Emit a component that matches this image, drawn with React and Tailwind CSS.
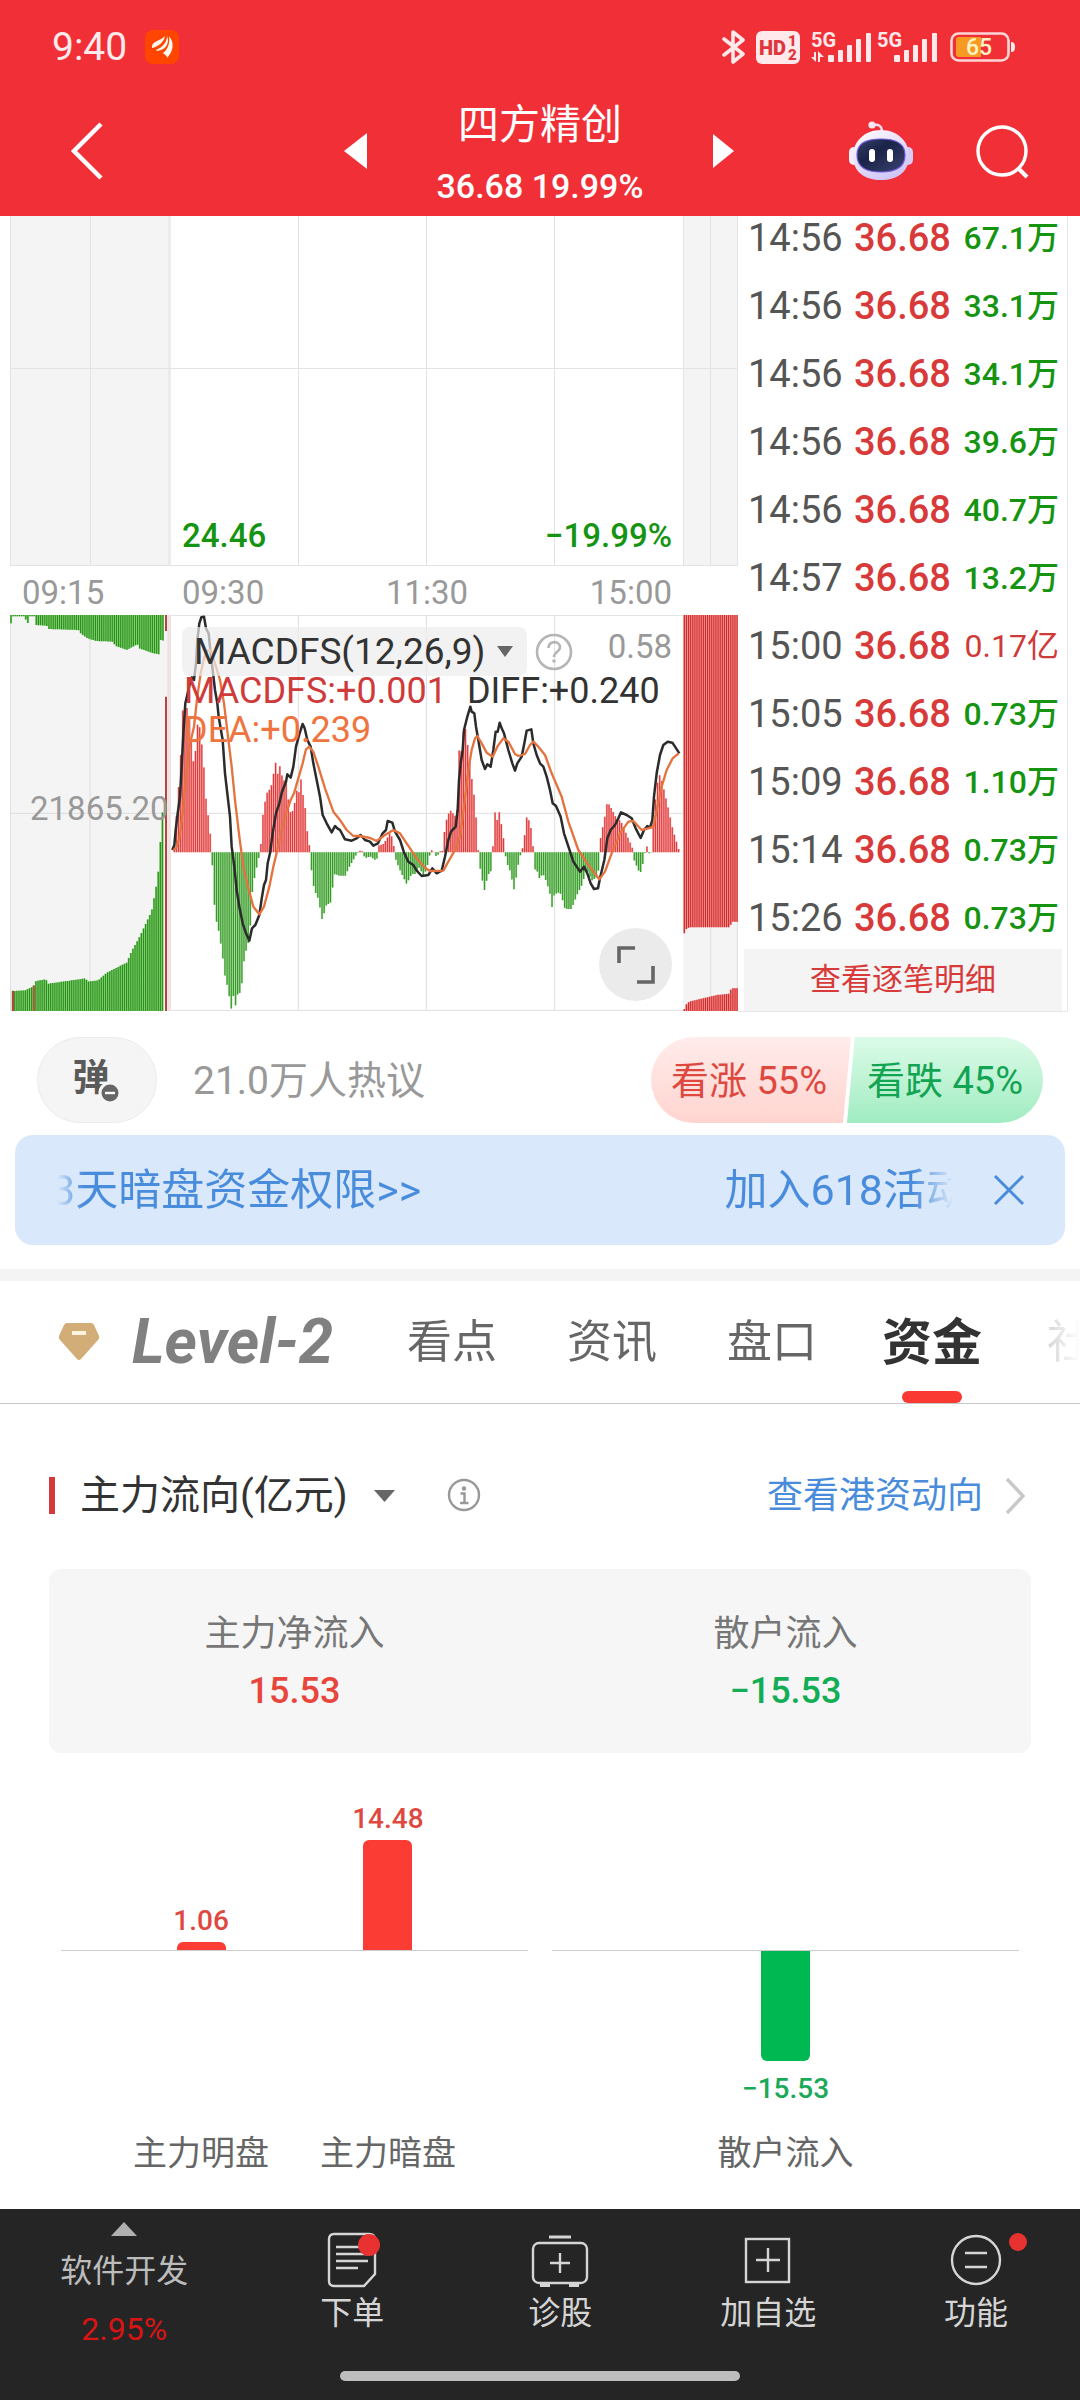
const TICKS = [
  { time: '14:56', price: '36.68', volume: '67.1万' },
  { time: '14:56', price: '36.68', volume: '33.1万' },
  { time: '14:56', price: '36.68', volume: '34.1万' },
  { time: '14:56', price: '36.68', volume: '39.6万' },
  { time: '14:56', price: '36.68', volume: '40.7万' },
  { time: '14:57', price: '36.68', volume: '13.2万' },
  { time: '15:00', price: '36.68', volume: '0.17亿', up: true },
  { time: '15:05', price: '36.68', volume: '0.73万' },
  { time: '15:09', price: '36.68', volume: '1.10万' },
  { time: '15:14', price: '36.68', volume: '0.73万' },
  { time: '15:26', price: '36.68', volume: '0.73万' },
];

// MACD lines and histogram, in chart units (x 30-2214, y 45-1233)
const DIFF_LINE =
  '517,750 523,735 527,690 533,640 540,590 545,500 550,400 556,310 570,250 576,232 582,240 588,190 592,120 598,70 604,52 612,50 618,85 626,100 632,160 638,210 645,270 652,310 656,350 668,420 675,520 690,650 695,740 703,800 710,870 718,920 728,970 738,1000 748,1022 756,985 766,975 778,945 786,890 792,855 798,840 803,790 810,760 818,700 828,640 838,610 846,575 858,545 862,523 872,533 880,500 888,440 896,410 902,390 908,372 914,385 922,420 932,440 940,490 950,540 960,590 968,645 980,670 995,697 1005,678 1012,685 1020,690 1035,718 1055,722 1070,715 1082,705 1095,720 1110,725 1120,737 1134,730 1148,700 1158,690 1163,663 1177,668 1185,695 1200,720 1213,760 1225,785 1240,795 1250,812 1265,828 1285,825 1297,805 1310,820 1325,812 1335,770 1345,720 1353,695 1367,680 1373,630 1377,540 1382,490 1388,450 1392,390 1402,350 1411,320 1415,335 1423,340 1428,380 1435,420 1445,480 1455,507 1462,493 1472,500 1480,450 1487,395 1493,395 1499,368 1505,385 1512,400 1525,450 1537,490 1545,512 1552,490 1565,470 1573,430 1580,392 1594,388 1600,430 1610,465 1620,490 1630,500 1640,530 1650,570 1658,610 1668,618 1682,650 1692,700 1707,745 1720,785 1740,815 1752,800 1762,820 1772,850 1782,867 1794,865 1800,835 1813,780 1822,715 1832,690 1845,675 1855,655 1863,637 1880,645 1895,655 1907,685 1922,714 1932,690 1942,678 1950,683 1957,660 1962,590 1970,520 1980,465 1990,435 2003,425 2017,428 2025,440 2038,460';

const DEA_LINE =
  '520,750 528,745 538,715 548,640 558,530 568,440 582,380 592,290 602,220 612,175 622,152 632,150 645,190 660,240 672,310 684,410 695,500 705,600 718,710 730,800 745,865 760,920 778,943 792,920 808,860 820,800 832,750 845,690 858,640 872,600 882,580 895,535 908,490 918,448 928,440 940,455 955,500 975,565 1000,635 1020,660 1040,690 1060,708 1080,708 1110,714 1130,723 1155,705 1180,690 1200,700 1220,730 1250,775 1275,803 1290,813 1330,812 1345,785 1365,750 1380,710 1392,620 1405,510 1415,450 1425,415 1432,408 1445,430 1460,458 1478,470 1492,440 1510,415 1525,425 1545,462 1555,468 1575,462 1590,435 1600,425 1615,440 1635,465 1655,520 1685,590 1705,665 1735,750 1765,795 1798,838 1815,815 1835,760 1860,700 1885,665 1900,663 1925,690 1945,685 1960,680 1972,620 1985,560 2000,510 2018,475 2036,460';

const HISTOGRAM = [
  [523, 10], [532, 150], [540, 250], [549, 440], [560, 440], [568, 385], [575, 330], [582, 250], [594, 400], [602, 360],
  [612, 250], [620, 130], [628, 95], [634, 5], [637, -40], [645, -190], [655, -230], [665, -290], [675, -370], [683, -405],
  [695, -475], [700, -430], [708, -465], [715, -410], [722, -430], [733, -315], [745, -270], [752, -210], [758, -105],
  [770, -45], [780, 0], [784, 40], [790, 130], [803, 185], [812, 190], [827, 270], [833, 235], [840, 260], [848, 220],
  [858, 210], [870, 120], [880, 125], [890, 185], [897, 180], [903, 220], [912, 150], [918, 120], [924, 30], [931, 15],
  [934, -50], [942, -110], [955, -140], [967, -205], [978, -160], [992, -150], [1003, -65], [1018, -70], [1036, -70],
  [1050, -40], [1070, -5], [1080, 5], [1090, 2], [1094, -18], [1110, -12], [1128, -25], [1134, -10], [1136, 20], [1150, 25],
  [1160, 40], [1170, 60], [1178, 40], [1184, 2], [1188, -25], [1205, -65], [1220, -95], [1235, -65], [1245, -65],
  [1258, -45], [1270, -70], [1280, -50], [1290, -5], [1297, 10], [1310, -15], [1320, 3], [1331, 5], [1334, 80],
  [1345, 115], [1352, 125], [1365, 110], [1372, 130], [1378, 320], [1385, 300], [1393, 395], [1400, 345], [1408, 280],
  [1418, 200], [1425, 150], [1432, 50], [1436, -20], [1445, -75], [1455, -120], [1462, -70], [1474, -55], [1478, 5],
  [1485, 120], [1492, 95], [1499, 125], [1506, 70], [1514, 20], [1518, -25], [1530, -55], [1543, -115], [1552, -50],
  [1562, -5], [1570, 20], [1581, 112], [1592, 80], [1600, 10], [1604, -50], [1614, -60], [1620, -85], [1627, -60],
  [1640, -90], [1650, -125], [1657, -170], [1663, -125], [1680, -120], [1688, -145], [1695, -170], [1715, -170],
  [1730, -130], [1745, -100], [1760, -50], [1775, -85], [1790, -75], [1799, -40], [1801, 40], [1815, 110], [1822, 152],
  [1835, 130], [1850, 100], [1862, 95], [1875, 65], [1890, 30], [1900, 5], [1903, -25], [1918, -60], [1924, -58],
  [1932, -15], [1938, 15], [1944, 20], [1946, -3], [1956, 0], [1960, 90], [1970, 200], [1980, 235], [1990, 195],
  [2003, 140], [2018, 70], [2030, 30], [2038, 3],
];

const PRE_TOP = [
  [33, 25], [39, 4], [75, 4], [82, 32], [88, 4], [104, 4], [108, 30], [140, 32], [145, 42], [235, 45], [242, 55],
  [262, 70], [290, 78], [340, 80], [345, 92], [380, 105], [412, 88], [418, 100], [460, 115], [478, 118], [484, 60], [492, 88],
];
const PRE_BOTTOM = [
  [38, 60], [75, 62], [100, 74], [108, 90], [138, 95], [145, 82], [258, 98], [262, 88], [295, 92], [320, 115],
  [380, 145], [395, 180], [420, 225], [455, 300], [468, 370], [478, 440], [484, 570], [492, 630],
];
const POST_TOP = [[2053, 955], [2059, 942], [2068, 937], [2190, 937], [2195, 920], [2212, 920]];
const POST_BOTTOM = [[2053, 6], [2059, 20], [2068, 28], [2110, 38], [2150, 48], [2187, 52], [2194, 68], [2212, 68]];

const STEP = 6.33;

const sample = (points) => {
  const bars = [];
  let i = 0;
  for (let x = points[0][0]; x <= points[points.length - 1][0]; x += STEP) {
    while (i < points.length - 2 && points[i + 1][0] < x) i += 1;
    const [x0, v0] = points[i];
    const [x1, v1] = points[i + 1];
    bars.push([x, v0 + ((v1 - v0) * (x - x0)) / (x1 - x0)]);
  }
  return bars;
};

const flip = (bars) => bars.map(([x, v]) => [x, -v]);

const barPath = (bars, base) => bars.map(([x, v]) => `M${x.toFixed(1)} ${base}V${(base - v).toFixed(1)}`).join('');

const Bars = ({ bars, base, color, light }) => (
  <>
    <path d={barPath(bars, base)} stroke={light} strokeWidth="6.4" />
    <path d={barPath(bars, base)} stroke={color} strokeWidth="3.6" />
  </>
);

const RED = '#d22a2a';
const RED_LIGHT = '#f59a9a';
const GREEN = '#279314';
const GREEN_LIGHT = '#8fd083';

const Signal = ({ arrows }) => (
  <svg width="60" height="34" viewBox="0 0 60 34" fill="#ffe9ea" aria-hidden="true">
    <text x="0" y="17" fontFamily="Roboto" fontSize="20" fontWeight="700">5G</text>
    {arrows && <path d="M3 22h2v10l-5-5h3zM9 32h-2V21l6 6h-4z" />}
    <rect x="17" y="25" width="6" height="7" rx="1" />
    <rect x="27" y="20" width="5" height="12" rx="1" />
    <rect x="36" y="15" width="5" height="17" rx="1" />
    <rect x="45" y="9" width="5" height="23" rx="1" />
    <rect x="55" y="3" width="5" height="29" rx="1" />
  </svg>
);

const StatusBar = () => (
  <div className="flex h-[94px] items-center pl-[52px] pr-16 text-[#ffe9ea]">
    <span className="text-[39px] leading-none">9:40</span>
    <svg className="ml-[18px]" width="34" height="34" viewBox="0 0 34 34" aria-hidden="true">
      <rect width="34" height="34" rx="8" fill="#ff4500" />
      <path
        d="M7 16C8 11 15 11 20 6C19 12 13 17 7 18zM11 20C18 17 22 12 22 6C25 13 21 20 12 21zM18 23C23 19 25 13 24 6C30 13 28 22 22 28C22 25 20 25 18 23z"
        fill="#fff8ee"
      />
    </svg>
    <div className="ml-auto flex items-center">
      <svg width="24" height="36" viewBox="0 0 24 36" fill="none" stroke="#ffe9ea" strokeWidth="3.6" strokeLinejoin="round" strokeLinecap="round" aria-hidden="true">
        <path d="M2 10L21 25L11 33V3L21 11L2 26" />
      </svg>
      <svg className="ml-[10px]" width="44" height="33" viewBox="0 0 44 33" aria-hidden="true">
        <rect width="44" height="33" rx="6" fill="#ffe9ea" />
        <g fill="#e0353c" fontFamily="Roboto" fontWeight="900">
          <text x="3" y="24" fontSize="20">HD</text>
          <text x="32" y="15" fontSize="15">1</text>
          <text x="32" y="29" fontSize="15">2</text>
        </g>
      </svg>
      <div className="ml-[11px] flex gap-[6px]">
        <Signal arrows />
        <Signal />
      </div>
      <svg className="ml-[13px]" width="66" height="30" viewBox="0 0 66 30" aria-hidden="true">
        <rect x="1.5" y="1.5" width="57" height="27" rx="7" fill="none" stroke="#ffd5d6" strokeWidth="2.6" />
        <path d="M9 5h22v20H9a3 3 0 0 1-3-3V8a3 3 0 0 1 3-3z" fill="#f79a22" />
        <path d="M61 10c3 0 4 2 4 5s-1 5-4 5z" fill="#ffe9ea" />
        <text x="29" y="23" textAnchor="middle" fill="#fff3c4" fontFamily="Roboto" fontSize="23" fontWeight="500">65</text>
      </svg>
    </div>
  </div>
);

const RobotIcon = () => (
  <svg width="64" height="60" viewBox="0 0 64 60" aria-hidden="true">
    <defs>
      <linearGradient id="helmet" x1="0" y1="0" x2="0.6" y2="1">
        <stop offset="0" stopColor="#ffffff" />
        <stop offset="0.6" stopColor="#e4dcfb" />
        <stop offset="1" stopColor="#cfc6f5" />
      </linearGradient>
      <linearGradient id="visor" x1="0" y1="0" x2="1" y2="1">
        <stop offset="0" stopColor="#35406b" />
        <stop offset="0.4" stopColor="#1a2448" />
        <stop offset="1" stopColor="#3a4370" />
      </linearGradient>
    </defs>
    <path d="M24 4C30 3 33 5 33 11" fill="none" stroke="#f3dff0" strokeWidth="2.4" />
    <circle cx="23" cy="4" r="3.6" fill="#f7e6f4" />
    <rect x="0" y="26" width="10" height="18" rx="5" fill="#f4effc" />
    <rect x="54" y="26" width="10" height="18" rx="5" fill="#d6ccf5" />
    <path d="M32 9C48 9 60 20 60 35C60 51 48 59 32 59S4 51 4 35C4 20 16 9 32 9z" fill="url(#helmet)" />
    <path d="M32 18C47 18 56 22 56 34S47 51 32 51S8 46 8 34S17 18 32 18z" fill="url(#visor)" stroke="#6f58d8" strokeWidth="1.2" />
    <rect x="20" y="28" width="6" height="13" rx="3" fill="#fff" />
    <rect x="38" y="28" width="6" height="13" rx="3" fill="#fff" />
  </svg>
);

const Header = () => (
  <header className="bg-[#f12f37] text-white">
    <StatusBar />
    <div className="grid grid-cols-[1fr_auto_1fr]">
      <div className="flex items-center justify-between pb-2 pl-[70px] pr-[70px]">
        <button type="button" aria-label="返回">
          <svg width="34" height="58" viewBox="0 0 34 58" fill="none" stroke="#fff" strokeWidth="4.5">
            <path d="M31 2L4 29L31 56" />
          </svg>
        </button>
        <button type="button" aria-label="上一只">
          <svg width="24" height="36" viewBox="0 0 24 36" fill="#fff">
            <path d="M24 0V36L1 18z" />
          </svg>
        </button>
      </div>
      <div className="text-center">
        <h1 className="text-[41px] leading-[62px]">四方精创</h1>
        <p className="text-[34px] font-medium leading-[60px]">36.68 19.99%</p>
      </div>
      <div className="flex items-center justify-between pb-2 pl-[70px] pr-[51px]">
        <button type="button" aria-label="下一只">
          <svg width="22" height="34" viewBox="0 0 22 34" fill="#fff">
            <path d="M0 0V34L21 17z" />
          </svg>
        </button>
        <div className="flex items-center gap-[62px]">
          <button type="button" aria-label="智能助手">
            <RobotIcon />
          </button>
          <button type="button" aria-label="搜索">
            <svg width="54" height="56" viewBox="0 0 54 56" fill="none" stroke="#fff" strokeWidth="3.4">
              <circle cx="27" cy="28" r="24" />
              <path d="M43 45L52 54" strokeWidth="4" />
            </svg>
          </button>
        </div>
      </div>
    </div>
  </header>
);

const PriceChart = () => (
  <div className="relative h-[350px]">
    <svg className="block h-full w-full" viewBox="0 0 728 350" preserveAspectRatio="none" aria-hidden="true">
      <rect width="160" height="350" fill="#f4f4f4" />
      <rect x="674" width="54" height="350" fill="#f4f4f4" />
      <g fill="#e3e3e3">
        <rect width="1" height="350" />
        <rect x="80" width="1" height="350" />
        <rect x="158" width="3" height="350" fill="#ebebeb" />
        <rect x="288" width="1" height="350" />
        <rect x="416" width="1" height="350" />
        <rect x="544" width="1" height="350" />
        <rect x="673" width="1" height="350" />
        <rect x="700" width="1" height="350" />
        <rect x="727" width="1" height="350" />
        <rect y="152" width="728" height="1" />
        <rect y="349" width="728" height="1" />
      </g>
    </svg>
    <div className="absolute bottom-2 left-[172px] right-[66px] flex justify-between text-[33px] font-medium leading-[44px] text-[#159412]">
      <span>24.46</span>
      <span>−19.99%</span>
    </div>
  </div>
);

const TimeAxis = () => (
  <div className="flex h-[49px] items-center pl-3 pr-[66px] pt-1 text-[33px] leading-none text-[#999]">
    <span className="w-40">09:15</span>
    <div className="flex flex-1 items-center justify-between">
      <span>09:30</span>
      <span>11:30</span>
      <span>15:00</span>
    </div>
  </div>
);

const MacdChart = () => {
  const histogram = sample(HISTOGRAM);

  return (
    <div className="relative h-[396px]">
      <svg className="block h-full w-full" viewBox="30 45 2184 1188" preserveAspectRatio="none" fill="none" aria-hidden="true">
        <rect x="30" y="45" width="480" height="1188" fill="#f4f4f4" />
        <rect x="2050" y="45" width="164" height="1188" fill="#f4f4f4" />
        <g stroke="#dedede" strokeWidth="3">
          <path d="M31 45V1233M270 45V1233M895 45V1233M1279 45V1233M1664 45V1233M2132 45V1233M2212 45V1233" />
          <path d="M30 46H2214M30 640H2050M510 1231H2214" />
        </g>
        <rect x="502" y="45" width="11" height="1188" fill="#f0e2e2" />

        <Bars bars={flip(sample(PRE_TOP))} base={45} color={GREEN} light={GREEN_LIGHT} />
        <Bars bars={sample(PRE_BOTTOM)} base={1233} color={GREEN} light={GREEN_LIGHT} />
        <path d="M498 45V93M498 290V1233M39 1172V1233" stroke="#b5453c" strokeWidth="6" />
        <path d="M102 1157V1233" stroke="#9a6a3a" strokeWidth="8" />
        <Bars bars={flip(sample(POST_TOP))} base={45} color={RED} light={RED_LIGHT} />
        <Bars bars={sample(POST_BOTTOM)} base={1233} color={RED} light={RED_LIGHT} />

        <Bars bars={histogram.filter(([, v]) => v >= 0)} base={757} color="#de3c3c" light="#f9b0b0" />
        <Bars bars={histogram.filter(([, v]) => v < 0)} base={757} color="#389a28" light="#aedda8" />
        <polyline points={DIFF_LINE} stroke="#2b2b2b" strokeWidth="7.5" strokeLinejoin="round" />
        <polyline points={DEA_LINE} stroke="#e5733f" strokeWidth="7" strokeLinejoin="round" />
      </svg>

      <div className="absolute left-[172px] right-[66px] top-3 flex items-center">
        <button type="button" className="flex h-[49px] items-center gap-3 rounded-lg bg-[#ececec]/70 pl-3 pr-[14px] text-[37px] leading-none text-[#333]">
          MACDFS(12,26,9)
          <svg width="16" height="11" viewBox="0 0 16 11" fill="#666" aria-hidden="true">
            <path d="M0 0H16L8 11z" />
          </svg>
        </button>
        <button type="button" aria-label="指标说明" className="ml-2">
          <svg width="38" height="38" viewBox="0 0 38 38" fill="none" stroke="#b5b5b5" strokeWidth="2.6">
            <circle cx="19" cy="19" r="17" />
            <path d="M13.5 15C13.5 7 25 7.5 25 14.5C25 19 19 18.5 19 24" />
            <circle cx="19" cy="28" r="1" fill="#b5b5b5" strokeWidth="1.5" />
          </svg>
        </button>
        <span className="ml-auto self-start text-[33px] leading-[40px] text-[#999]">0.58</span>
      </div>
      <p className="absolute left-[174px] right-[60px] top-[57px] text-[36px] leading-[39px] text-[#ef7440]">
        <span className="mr-5 text-[#cf3a3a]">MACDFS:+0.001</span>
        <span className="text-[#333]">DIFF:+0.240</span>
        <br />
        DEA:+0.239
      </p>
      <span className="absolute left-5 top-[174px] text-[33px] leading-[40px] text-[#999]">21865.20</span>

      <button type="button" aria-label="全屏" className="absolute bottom-[10px] right-[66px] rounded-full bg-[#ebebeb]">
        <svg width="73" height="73" viewBox="0 0 73 73" fill="none" stroke="#666" strokeWidth="3.6">
          <path d="M20 35V20H36M54 38V54H38" />
        </svg>
      </button>
    </div>
  );
};

const TickTable = () => (
  <aside className="flex h-[796px] w-[330px] flex-col border-b border-r border-[#e8e8e8]">
    <div className="min-h-0 flex-1 overflow-hidden">
      <table className="-mt-3 w-full table-fixed text-[38px] leading-none">
        <tbody>
          {TICKS.map((tick, index) => (
            <tr key={index} className="h-[68px]">
              <td className="w-[116px] pl-[10px] text-left text-[#555]">{tick.time}</td>
              <td className="w-[104px] text-left font-medium text-[#d83a3a]">{tick.price}</td>
              <td className={`pr-2 text-right text-[32px] ${tick.up ? 'text-[#cf3a3a]' : 'font-medium text-[#159412]'}`}>
                {tick.volume}
              </td>
            </tr>
          ))}
        </tbody>
      </table>
    </div>
    <button type="button" className="ml-[6px] mr-[5px] h-[62px] shrink-0 bg-[#f4f4f4] text-[31px] text-[#d83a3a]">
      查看逐笔明细
    </button>
  </aside>
);

const ChatRow = () => (
  <div className="flex items-center pb-3 pl-[37px] pr-[37px] pt-[25px]">
    <button
      type="button"
      aria-label="弹幕"
      className="flex h-[86px] w-[120px] items-center justify-center rounded-full border border-[#ececec] bg-[#f5f5f5] pb-1 pr-3"
    >
      <span className="relative text-[37px] font-bold leading-none text-[#5a5a5a]">
        弹
        <svg className="absolute -bottom-2 -right-3" width="24" height="24" viewBox="0 0 24 24" aria-hidden="true">
          <circle cx="12" cy="12" r="10" fill="#666" stroke="#f5f5f5" strokeWidth="3" />
          <path d="M7 12H17" stroke="#fff" strokeWidth="2.4" />
        </svg>
      </span>
    </button>
    <a href="#talk" className="ml-9 pt-0.5 text-[39px] text-[#999]">
      21.0万人热议
    </a>
    <div className="ml-auto flex h-[86px] overflow-hidden rounded-full text-[38px]">
      <button
        type="button"
        className="w-[200px] bg-linear-to-b from-[#ffeceb] to-[#ffd4cf] pr-1 pt-0.5 text-[#df483f] [clip-path:polygon(0_0,100%_0,96%_100%,0_100%)]"
      >
        看涨 55%
      </button>
      <button
        type="button"
        className="-ml-1 w-[196px] bg-linear-to-b from-[#dcfbe9] to-[#a0ecc1] pt-0.5 text-[#12a453] [clip-path:polygon(4%_0,100%_0,100%_100%,0_100%)]"
      >
        看跌 45%
      </button>
    </div>
  </div>
);

const Banner = () => (
  <div className="mx-[15px] mb-6 flex h-[110px] items-center rounded-[18px] bg-[#d9e8fb] pl-9 pr-10 text-[43px] text-[#4a8cdc]">
    <a
      href="#activity"
      className="flex min-w-0 flex-1 justify-between overflow-hidden whitespace-nowrap [mask-image:linear-gradient(to_right,transparent_6px,black_32px,black_calc(100%_-_40px),transparent)]"
    >
      <span>3天暗盘资金权限&gt;&gt;</span>
      <span className="-mr-4">加入618活动</span>
    </a>
    <button type="button" aria-label="关闭" className="ml-10">
      <svg width="32" height="32" viewBox="0 0 32 32" fill="none" stroke="#4a8cdc" strokeWidth="3">
        <path d="M2 2L30 30M30 2L2 30" />
      </svg>
    </button>
  </div>
);

const TABS = ['看点', '资讯', '盘口', '资金', '社区'];

const Tabs = () => (
  <div className="border-b border-[#c8c8c8]">
    <div className="flex h-[122px] overflow-hidden pl-[58px] [mask-image:linear-gradient(to_left,transparent,black_60px)]">
      <button type="button" className="flex w-[314px] shrink-0 items-center gap-8 text-[#808080]">
        <svg width="42" height="40" viewBox="0 0 42 40" aria-hidden="true">
          <path d="M9 1H33Q35 1 36 3L41 14Q42 16 40 18L23 37Q21 39 19 37L2 18Q0 16 1 14L6 3Q7 1 9 1z" fill="#d3ad78" />
          <path d="M14 11H28" stroke="#fff4e0" strokeWidth="4" />
        </svg>
        <span className="text-[62px] font-bold italic leading-none">Level-2</span>
      </button>
      {TABS.map((tab) => (
        <button
          key={tab}
          type="button"
          className={`relative w-40 shrink-0 pt-0.5 ${tab === '资金' ? 'text-[50px] font-bold text-[#333]' : 'text-[45px] text-[#666]'} ${tab === '社区' ? 'opacity-50' : ''}`}
        >
          {tab}
          {tab === '资金' && <span className="absolute bottom-0 left-1/2 h-3 w-[60px] -translate-x-1/2 rounded-full bg-[#fa3a32]" />}
        </button>
      ))}
    </div>
  </div>
);

const FlowBar = ({ value, height, label, negative }) => (
  <div className="flex w-2/5 flex-col items-center">
    <div className="flex h-[197px] w-full flex-col items-center justify-end">
      {!negative && (
        <>
          <span className="mb-[6px] text-[28px] font-medium leading-[30px] text-[#df483f]">{value}</span>
          <span className="w-[49px] rounded-t-md bg-[#fa3c34]" style={{ height }} />
        </>
      )}
    </div>
    <div className="flex h-[178px] flex-col items-center">
      {negative && (
        <>
          <span className="w-[49px] rounded-b-md bg-[#00b852]" style={{ height }} />
          <span className="mt-[13px] text-[28px] font-medium leading-[30px] text-[#1aa957]">{value}</span>
        </>
      )}
    </div>
    <span className="whitespace-nowrap text-[34px] leading-[50px] text-[#666]">{label}</span>
  </div>
);

const FlowGroup = ({ children }) => (
  <div className="relative flex flex-1 justify-center">
    <div className="absolute left-0 right-0 top-[197px] h-px bg-[#ccc]" />
    {children}
  </div>
);

const MoneyFlow = () => (
  <section className="pt-[61px]">
    <div className="flex h-[60px] items-center pl-[49px] pr-[54px]">
      <span className="h-[37px] w-[6px] bg-[#d33a3a]" />
      <button type="button" className="ml-[25px] flex items-center gap-[26px] pt-0.5 text-[40px] text-[#333]">
        主力流向(亿元)
        <svg width="21" height="12" viewBox="0 0 21 12" fill="#666" aria-hidden="true">
          <path d="M0 0H21L10.5 12z" />
        </svg>
      </button>
      <button type="button" aria-label="说明" className="ml-[52px]">
        <svg width="34" height="34" viewBox="0 0 34 34" fill="none" stroke="#999" strokeWidth="2.4">
          <circle cx="17" cy="17" r="15" />
          <circle cx="17" cy="10.5" r="1.5" fill="#999" strokeWidth="1.5" />
          <path d="M13.5 15.5H17.5V25M13 25H21.5" />
        </svg>
      </button>
      <a href="#hk" className="ml-auto flex items-center gap-[22px] pt-0.5 text-[36px] text-[#4a8cdc]">
        查看港资动向
        <svg width="21" height="38" viewBox="0 0 21 38" fill="none" stroke="#c8c8c8" strokeWidth="3.4" aria-hidden="true">
          <path d="M2 2L18 19L2 36" />
        </svg>
      </a>
    </div>

    <dl className="mx-[49px] mt-11 grid h-[184px] grid-cols-2 rounded-[12px] bg-[#f6f6f6] pt-[37px] text-center text-[36px]">
      <div>
        <dt className="leading-[56px] text-[#777]">主力净流入</dt>
        <dd className="font-medium leading-[58px] text-[#e8453c]">15.53</dd>
      </div>
      <div>
        <dt className="leading-[56px] text-[#777]">散户流入</dt>
        <dd className="font-medium leading-[58px] text-[#12ad55]">−15.53</dd>
      </div>
    </dl>

    <div className="flex gap-6 px-[61px]">
      <FlowGroup>
        <FlowBar value="1.06" height={8} label="主力明盘" />
        <FlowBar value="14.48" height={110} label="主力暗盘" />
      </FlowGroup>
      <FlowGroup>
        <FlowBar value="−15.53" height={111} label="散户流入" negative />
      </FlowGroup>
    </div>
  </section>
);

const NavItem = ({ label, children }) => (
  <button type="button" className="flex flex-1 flex-col items-center pt-[22px] text-[32px] leading-[44px] text-[#d5d5d5]">
    {children}
    <span>{label}</span>
  </button>
);

const BottomNav = () => (
  <footer className="mt-auto bg-[#252525]">
    <nav className="flex h-[162px]">
      <button type="button" className="flex w-[23%] flex-col items-center pt-[13px] text-[32px]">
        <svg width="26" height="14" viewBox="0 0 26 14" fill="#b0b0b0" aria-hidden="true">
          <path d="M13 0L26 14H0z" />
        </svg>
        <span className="mt-[6px] leading-[58px] text-[#bcbcbc]">软件开发</span>
        <span className="leading-[58px] text-[#d91414]">2.95%</span>
      </button>
      <NavItem label="下单">
        <svg width="60" height="60" viewBox="0 0 60 60" fill="none" stroke="#d5d5d5" strokeWidth="2.4" aria-hidden="true">
          <path d="M12 3H47Q53 3 53 9V43L42 55H12Q7 55 7 50V8Q7 3 12 3z" />
          <path d="M14 16H44M14 23H46M14 30H46M14 37H36" />
          <circle cx="47" cy="14" r="11" fill="#e83232" stroke="none" />
        </svg>
      </NavItem>
      <NavItem label="诊股">
        <svg width="60" height="60" viewBox="0 0 60 60" fill="none" stroke="#d5d5d5" strokeWidth="2.4" aria-hidden="true">
          <path d="M19 6H41" strokeWidth="3" />
          <rect x="3" y="12" width="54" height="40" rx="6" />
          <path d="M10 54H20M39 54H49" strokeWidth="4" />
          <path d="M20 32H40M30 22V42" />
        </svg>
      </NavItem>
      <NavItem label="加自选">
        <svg width="60" height="60" viewBox="0 0 60 60" fill="none" stroke="#d5d5d5" strokeWidth="2.4" aria-hidden="true">
          <rect x="8" y="8" width="43" height="43" />
          <path d="M18 29H42M30 17V41" />
        </svg>
      </NavItem>
      <NavItem label="功能">
        <span className="relative">
          <svg width="60" height="60" viewBox="0 0 60 60" fill="none" stroke="#d5d5d5" strokeWidth="2.4" aria-hidden="true">
            <circle cx="30" cy="29" r="24" />
            <path d="M19 22H41M19 36H41" />
          </svg>
          <span className="absolute -right-[21px] top-0.5 h-[18px] w-[18px] rounded-full bg-[#e83232]" />
        </span>
      </NavItem>
    </nav>
    <div className="flex h-[29px] justify-center">
      <span className="h-[10px] w-[37%] rounded-full bg-[#bdbdbd]" />
    </div>
  </footer>
);

const App = () => (
  <div className="flex min-h-screen flex-col bg-white font-[Roboto,'Noto_Sans_CJK_SC',sans-serif]">
    <Header />
    <main>
      <section className="flex pl-[10px] pr-3">
        <div className="min-w-0 flex-1">
          <PriceChart />
          <TimeAxis />
          <MacdChart />
        </div>
        <TickTable />
      </section>
      <ChatRow />
      <Banner />
      <div className="h-3 bg-[#f4f4f4]" />
      <Tabs />
      <MoneyFlow />
    </main>
    <BottomNav />
  </div>
);

export default App;
